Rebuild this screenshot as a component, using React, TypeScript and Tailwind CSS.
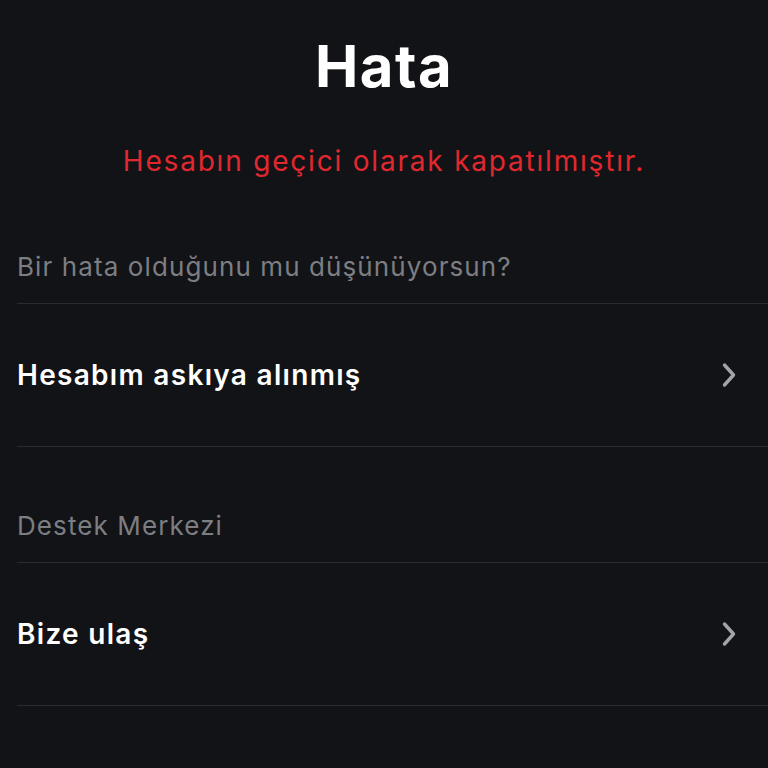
import React from 'react';

const Chevron = () => (
  <svg width="18" height="26" viewBox="0 0 18 26" fill="none" className="shrink-0">
    <path d="M4.5 3 L13.5 13 L4.5 23" stroke="#a3a4a8" strokeWidth="3.4" strokeLinecap="round" strokeLinejoin="round" />
  </svg>
);

const SectionHeader = ({ label }: { label: string }) => (
  <div className="h-[116px] flex items-end pb-[17px] border-b border-[#2a2b2f]">
    <span className="text-[26px] text-[#7d7e82] tracking-[1.1px]">{label}</span>
  </div>
);

const Row = ({ label }: { label: string }) => (
  <div className="h-[143px] flex items-center justify-between pr-[30px] border-b border-[#2a2b2f]">
    <span className="text-[28px] font-semibold text-white tracking-[1.3px]">{label}</span>
    <Chevron />
  </div>
);

const App = () => {
  return (
    <div className="w-[768px] h-[768px] bg-[#121317] overflow-hidden" style={{ fontFamily: 'Inter, "Noto Sans", sans-serif' }}>
      <h1 className="pt-[30px] text-center text-[58px] font-bold text-white leading-[72px] tracking-[1.5px]">Hata</h1>
      <p className="mt-[42px] mb-[10px] text-center text-[28px] text-[#e0282e] leading-[34px] tracking-[1.8px]">Hesabın geçici olarak kapatılmıştır.</p>
      <div className="pl-[17px]">
        <SectionHeader label="Bir hata olduğunu mu düşünüyorsun?" />
        <Row label="Hesabım askıya alınmış" />
        <SectionHeader label="Destek Merkezi" />
        <Row label="Bize ulaş" />
      </div>
    </div>
  );
};

export default App;
